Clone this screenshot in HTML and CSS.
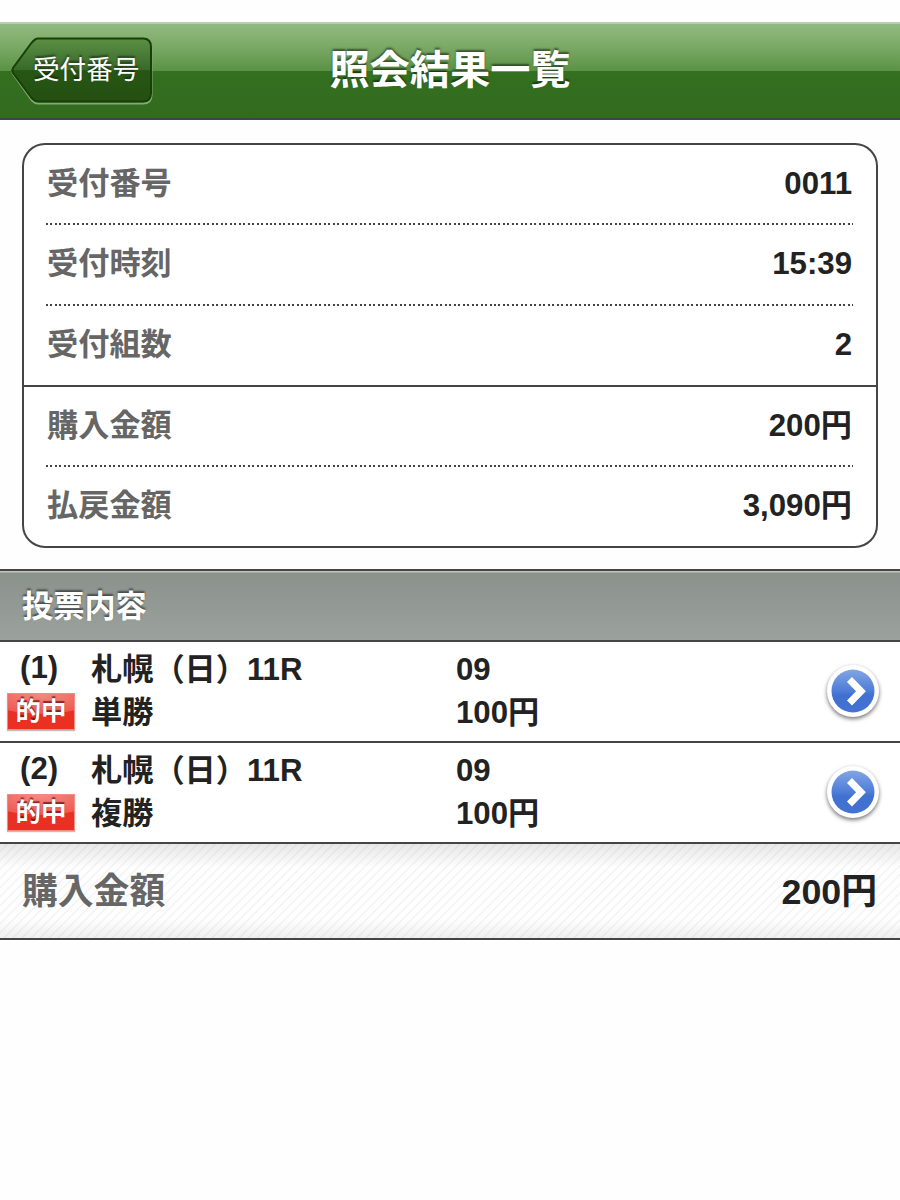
FILE: index.html
```html
<!doctype html>
<html lang="ja">
<head>
    <meta charset="UTF-8">
    <title>照会結果一覧</title>
    <link rel="stylesheet" href="styles.css">
</head>
<body>
    <div class="header">
        <a class="back">
            <svg class="back-bg" width="146" height="70" viewBox="0 0 146 70">
                <defs>
                    <linearGradient id="backFill" x1="0" y1="0" x2="0" y2="1">
                        <stop offset="0" stop-color="#5c9044"/>
                        <stop offset="0.5" stop-color="#38692a"/>
                        <stop offset="0.51" stop-color="#265614"/>
                        <stop offset="1" stop-color="#245012"/>
                    </linearGradient>
                </defs>
                <path d="M28 4H133Q141.500 4 141.500 13V59Q141.500 67.500 133 67.500H28Q25 67.500 22 64.500L3 38Q1.500 36 3 33.500L21 9.500Q25 4 28 4Z" fill="none" stroke="#82ad70" stroke-width="2"/>
                <path d="M28 2.400H133Q141 2.400 141 11V57Q141 65.500 133 65.500H28Q25 65.500 22 62.500L3 37Q1.500 34.500 3 32L21 7.500Q25 2.400 28 2.400Z" fill="url(#backFill)" stroke="#173f08" stroke-width="2"/>
            </svg>
            <span>受付番号</span>
        </a>
        <h1>照会結果一覧</h1>
    </div>

    <div class="card">
        <div class="item"><span>受付番号</span><b>0011</b></div>
        <div class="item dotted"><span>受付時刻</span><b>15:39</b></div>
        <div class="item dotted"><span>受付組数</span><b>2</b></div>
        <div class="item solid"><span>購入金額</span><b>200円</b></div>
        <div class="item dotted"><span>払戻金額</span><b>3,090円</b></div>
    </div>

    <h2 class="section">投票内容</h2>

    <div class="bet">
        <div class="no">
            <div class="num">(1)</div>
            <div class="hit">的中</div>
        </div>
        <div class="race">札幌（日）11R<br>単勝</div>
        <div class="money">09<br>100円</div>
        <svg class="arrow" width="64" height="64" viewBox="0 0 64 64">
            <defs>
                <linearGradient id="blue" x1="0" y1="0" x2="0" y2="1">
                    <stop offset="0" stop-color="#82a5e3"/>
                    <stop offset="0.5" stop-color="#4e7dd8"/>
                    <stop offset="0.6" stop-color="#4070d0"/>
                    <stop offset="1" stop-color="#4473d2"/>
                </linearGradient>
            </defs>
            <circle class="ring" cx="32" cy="31" r="26"/>
            <circle cx="32" cy="31" r="21.500" fill="url(#blue)"/>
            <path d="M28.500 19.500L40 31.200L28.500 43" fill="none" stroke="#fff" stroke-width="7"/>
        </svg>
    </div>
    <div class="bet">
        <div class="no">
            <div class="num">(2)</div>
            <div class="hit">的中</div>
        </div>
        <div class="race">札幌（日）11R<br>複勝</div>
        <div class="money">09<br>100円</div>
        <svg class="arrow" width="64" height="64" viewBox="0 0 64 64">
            <circle class="ring" cx="32" cy="31" r="26"/>
            <circle cx="32" cy="31" r="21.500" fill="url(#blue)"/>
            <path d="M28.500 19.500L40 31.200L28.500 43" fill="none" stroke="#fff" stroke-width="7"/>
        </svg>
    </div>

    <div class="total"><span>購入金額</span><b>200円</b></div>
</body>
</html>
```
FILE: styles.css
```css
*{
    margin: 0;
    padding: 0;
    box-sizing: border-box;
}
body{
    padding-top: 22px;
    background: #fefefe;
    color: #222;
    font-family: "Liberation Sans", "Noto Sans CJK JP", sans-serif;
    font-size: 31.2px;
    font-weight: bold;
}
b{
    font-weight: bold;
}
.header{
    position: relative;
    height: 98px;
    border-top: 2px solid #bacdb2;
    border-bottom: 2px solid #454248;
    background: linear-gradient(#91ba80 0, #7baa67 22px, #5a9244 47px, #347020 47px, #326a1e 100%);
}
.header h1{
    color: #fff;
    font-size: 40.2px;
    line-height: 94px;
    text-align: center;
    text-shadow: 0 -2px 2px rgba(0,0,0,.5);
}
.back{
    position: absolute;
    left: 10px;
    top: 12px;
    width: 146px;
    height: 70px;
    color: #fff;
    font-size: 26.6px;
    font-weight: normal;
    line-height: 69px;
    text-shadow: 0 -2px 2px rgba(0,0,0,.5);
}
.back-bg{
    position: absolute;
    left: 0;
    top: 0;
}
.back span{
    position: relative;
    display: block;
    padding-left: 23px;
}
.card{
    margin: 23px 22px 0;
    height: 405px;
    border: 2px solid #454545;
    border-radius: 23px;
    background: #fff;
}
.item{
    display: flex;
    justify-content: space-between;
    height: 80.6px;
    padding: 0 24px 0 23px;
    line-height: 81px;
}
.item:first-child{
    height: 78.4px;
    line-height: 77px;
}
.item span,
.total span{
    color: #666;
}
/* 2px dots, a little wider apart than a dotted border */
.dotted{
    background: repeating-linear-gradient(90deg, #444 0, #444 2px, transparent 2px, transparent 4.48px) 22px 0 / 807px 2px no-repeat;
}
.solid{
    border-top: 2px solid #454545;
    line-height: 78px;
}
.section{
    height: 73px;
    margin-top: 21px;
    padding-left: 22px;
    border-top: 2px solid #454545;
    border-bottom: 2px solid #454545;
    background: linear-gradient(#c0c5c0 0, #c0c5c0 1px, #8b928c 2px, #9ba29d 100%);
    color: #fff;
    font-size: 31.2px;
    line-height: 71px;
    text-shadow: 0 -2px 2px rgba(0,0,0,.5);
}
.bet{
    display: flex;
    height: 101px;
    padding-top: 6px;
    border-bottom: 2px solid #454545;
    background: #fff;
    line-height: 43px;
}
.no{
    width: 91px;
    padding-left: 7px;
}
.num{
    padding-left: 13px;
    line-height: 40px;
}
.hit{
    width: 68px;
    height: 37px;
    margin-top: 5px;
    border: 1px solid #ef8c86;
    background: radial-gradient(ellipse 60px 20px at 50% 0, #f58a82 0, #ee5a52 97%, #e93022 100%);
    color: #fff;
    font-size: 25.5px;
    line-height: 34px;
    text-align: center;
    text-shadow: 0 -2px 1px rgba(80,0,0,.65);
    box-shadow: 0 1px 1px rgba(0,0,0,.25);
}
.race{
    width: 365px;
}
.money{
    flex: 1;
}
.arrow{
    margin: 12px 15px 0 0;
}
.ring{
    fill: #fff;
    filter: drop-shadow(0 2px 2px rgba(0,0,0,.55));
}
.total{
    display: flex;
    justify-content: space-between;
    height: 96px;
    padding: 0 23px 0 22px;
    border-bottom: 2px solid #454545;
    background:
        linear-gradient(rgba(0,0,0,.09) 0, transparent 25%, transparent 80%, rgba(0,0,0,.06) 100%),
        repeating-linear-gradient(135deg, #fefefe 0, #fefefe 4px, #f1f1f1 5.2px, #fefefe 6.4px);
    font-size: 35.8px;
    line-height: 97px;
}
```
